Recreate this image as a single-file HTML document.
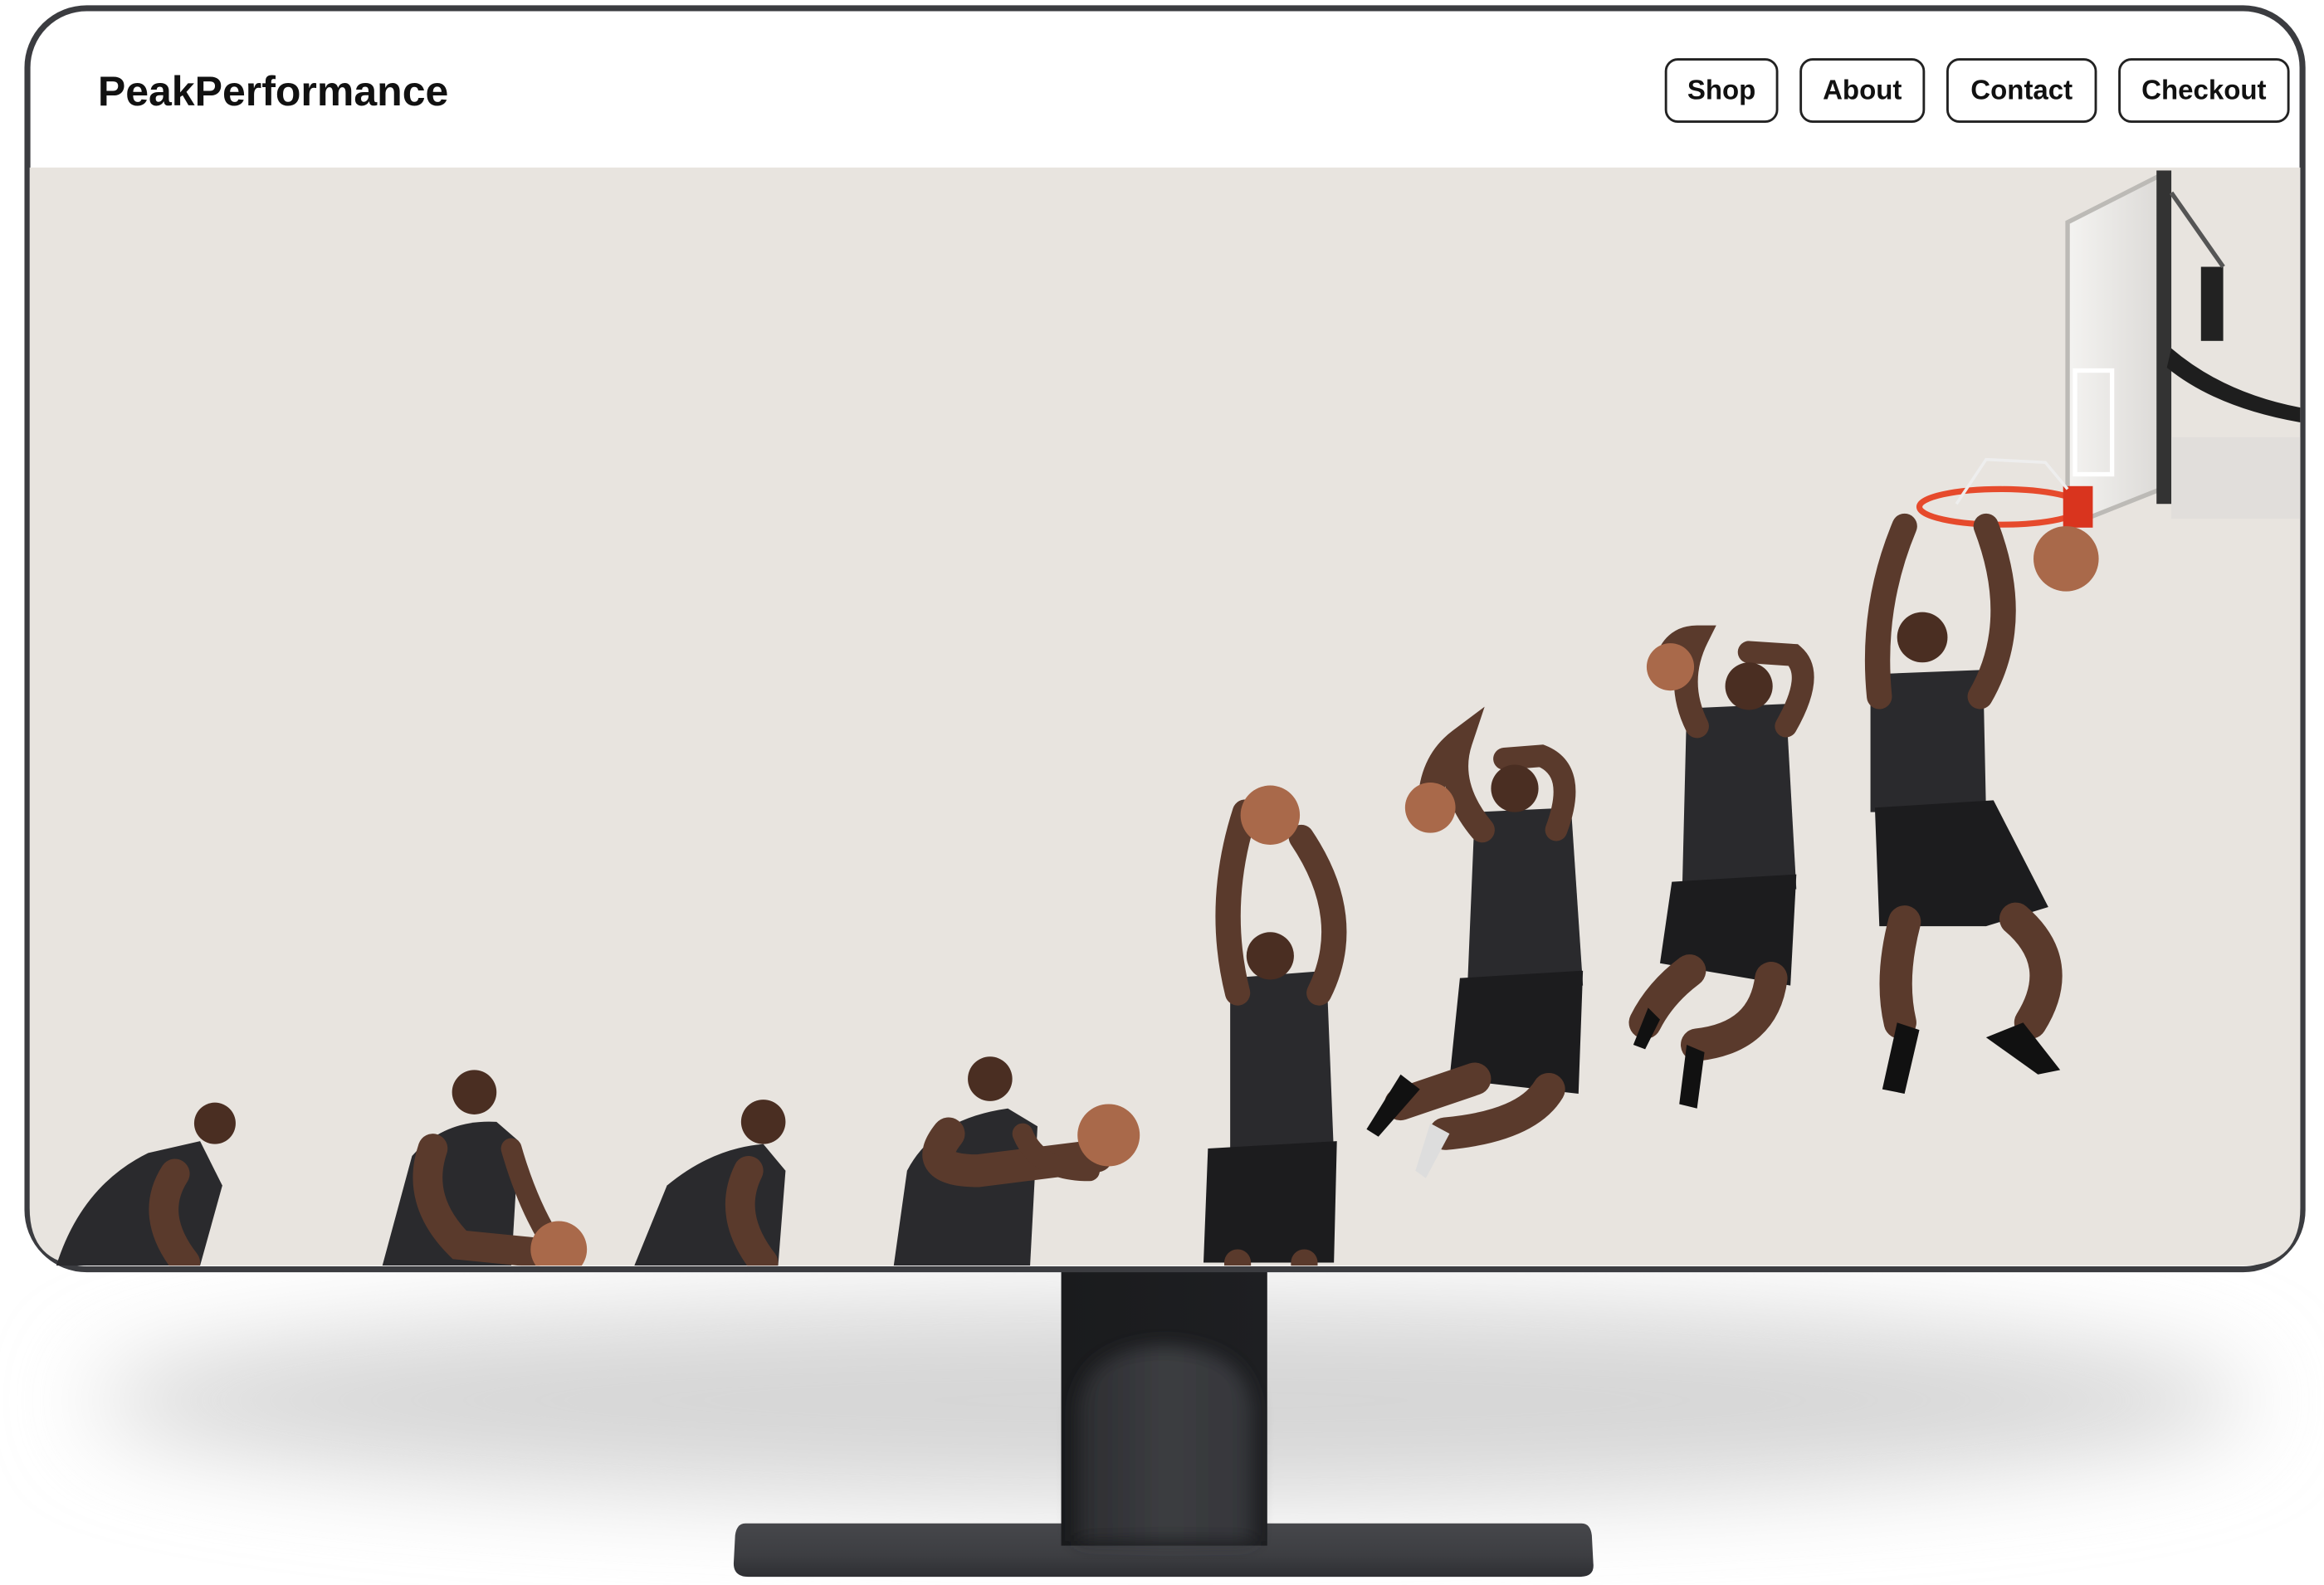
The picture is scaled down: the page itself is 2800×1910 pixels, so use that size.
<!DOCTYPE html>
<html><head><meta charset="utf-8"><style>
html,body{margin:0;padding:0;background:#fff;}
body{width:2800px;height:1910px;overflow:hidden;position:relative;}
svg{position:absolute;left:0;top:0;}
.t{font-family:"Liberation Sans",sans-serif;font-weight:bold;fill:#111;}
</style></head><body>
<svg width="2800" height="1910" viewBox="0 0 1568 1069.5">
<defs>
<filter id="bl" x="-20%" y="-100%" width="140%" height="300%"><feGaussianBlur stdDeviation="32"/></filter>
<filter id="bl2" x="-50%" y="-50%" width="200%" height="200%"><feGaussianBlur stdDeviation="6"/></filter>
<linearGradient id="neck" x1="0" x2="1"><stop offset="0" stop-color="#1a1b1d"/><stop offset="1" stop-color="#1e1f22"/></linearGradient>
<linearGradient id="ins" x1="0" x2="1"><stop offset="0" stop-color="#2c2d31"/><stop offset="0.5" stop-color="#3c3d41"/><stop offset="1" stop-color="#35363a"/></linearGradient>
<linearGradient id="base" x1="0" x2="0" y1="0" y2="1"><stop offset="0" stop-color="#46474b"/><stop offset="0.6" stop-color="#3d3e42"/><stop offset="1" stop-color="#2e2f33"/></linearGradient>
<linearGradient id="glass" x1="0" x2="1"><stop offset="0" stop-color="#f4f3f1"/><stop offset="1" stop-color="#dcdad7"/></linearGradient>
<clipPath id="scr"><rect x="20" y="113" width="1532" height="741"/></clipPath>
</defs>
<!-- shadow -->
<ellipse cx="790" cy="945" rx="730" ry="68" fill="#d6d6d6" filter="url(#bl)"/>
<!-- stand -->
<path d="M503 1028 Q497 1028 496 1036 L495 1055 Q495 1064 505 1064 L1066 1064 Q1076 1064 1075 1055 L1074 1036 Q1073 1028 1067 1028 Z" fill="url(#base)"/>
<rect x="716" y="855" width="139" height="188" fill="url(#neck)"/>
<path d="M727 1040 L727 955 Q727 910 785 908 Q845 910 845 955 L845 1040 Z" fill="url(#ins)" filter="url(#bl2)"/>
<!-- frame -->
<rect x="18.5" y="5.5" width="1535" height="851" rx="40" fill="#fff" stroke="#3b3c40" stroke-width="4"/>
<path d="M20 113 H1552 V815 Q1552 854 1513 854 H59 Q20 854 20 815 Z" fill="#e8e4df"/>
<g clip-path="url(#scr)">
<path d="M1395 150 L1458 118 L1458 330 L1395 355 Z" fill="url(#glass)" stroke="#bcbab6" stroke-width="3"/>
<rect x="1400" y="250" width="25" height="70" fill="none" stroke="#fff" stroke-width="3"/>
<rect x="1455" y="115" width="10" height="225" fill="#333"/>
<path d="M1465 235 Q1500 265 1552 275 L1552 285 Q1495 275 1462 248 Z" fill="#1e1e1e"/>
<rect x="1485" y="180" width="15" height="50" fill="#222"/>
<path d="M1465 130 L1500 180" stroke="#555" stroke-width="3"/>
<rect x="1465" y="295" width="87" height="55" fill="#dedcd9" opacity="0.8"/>
<ellipse cx="1350" cy="342" rx="55" ry="12" fill="none" stroke="#e64a2c" stroke-width="4"/>
<rect x="1392" y="328" width="20" height="28" fill="#d9341e"/>
<path d="M1320 340 L1340 310 L1380 312 L1395 330" stroke="#eee" stroke-width="2" fill="none"/>
<circle cx="1394" cy="377" r="22" fill="#a9694a"/>
<g fill="#2a2a2d">
<path d="M38 854 Q55 800 100 778 L135 770 L150 800 L135 854 Z"/>
<path d="M258 854 L278 780 Q300 755 335 757 L350 770 L345 854 Z"/>
<path d="M428 854 L450 800 Q480 775 515 772 L530 790 L525 854 Z"/>
<path d="M603 854 L612 790 Q630 755 680 748 L700 760 L695 854 Z"/>
<path d="M830 660 L895 655 L900 780 L830 780 Z"/>
<path d="M815 775 L902 770 L900 852 L812 852 Z" fill="#1c1c1e"/>
<path d="M995 548 L1060 545 L1068 665 L990 668 Z"/>
<path d="M985 660 L1068 655 L1065 738 L978 728 Z" fill="#1c1c1e"/>
<path d="M1138 478 L1205 475 L1212 600 L1135 600 Z"/>
<path d="M1128 595 L1212 590 L1208 665 L1120 650 Z" fill="#1c1c1e"/>
<path d="M1262 455 L1338 452 L1340 548 L1262 548 Z"/>
<path d="M1265 545 L1345 540 L1382 612 L1340 625 L1268 625 Z" fill="#1c1c1e"/>
</g>
<g stroke="#5a3a2c" stroke-linecap="round" fill="none">
<path d="M118 792 Q100 820 125 852" stroke-width="20"/>
<path d="M292 775 Q280 810 310 840 L360 845" stroke-width="20"/>
<path d="M345 775 Q355 810 370 835" stroke-width="14"/>
<path d="M505 790 Q490 820 515 852" stroke-width="20"/>
<path d="M640 765 Q620 790 660 790 L740 780" stroke-width="22"/>
<path d="M690 765 Q700 790 735 790" stroke-width="14"/>
<path d="M835 670 Q820 610 840 548" stroke-width="17"/>
<path d="M890 670 Q915 620 878 565" stroke-width="17"/>
<path d="M835 852 L835 860 M880 852 L880 860" stroke-width="18"/>
<path d="M1000 560 Q975 530 985 500 Q965 515 965 545" stroke-width="17"/>
<path d="M1050 560 Q1065 520 1040 510 L1015 512" stroke-width="15"/>
<path d="M995 728 Q960 740 945 745" stroke-width="22"/>
<path d="M1045 735 Q1030 760 975 765" stroke-width="22"/>
<path d="M1145 490 Q1130 460 1145 430 Q1130 430 1125 445" stroke-width="16"/>
<path d="M1205 490 Q1225 455 1210 442 L1180 440" stroke-width="15"/>
<path d="M1140 655 Q1120 670 1110 690" stroke-width="22"/>
<path d="M1195 660 Q1190 700 1145 705" stroke-width="22"/>
<path d="M1268 470 Q1262 410 1285 355" stroke-width="17"/>
<path d="M1336 470 Q1365 420 1340 355" stroke-width="17"/>
<path d="M1285 622 Q1275 660 1282 690" stroke-width="22"/>
<path d="M1360 620 Q1395 650 1370 690" stroke-width="22"/>
</g>
<g fill="#4a2e22">
<circle cx="145" cy="758" r="14"/><circle cx="320" cy="737" r="15"/><circle cx="515" cy="757" r="15"/><circle cx="668" cy="728" r="15"/>
<circle cx="857" cy="645" r="16"/><circle cx="1022" cy="532" r="16"/><circle cx="1180" cy="463" r="16"/><circle cx="1297" cy="430" r="17"/>
</g>
<g fill="#a9694a">
<circle cx="377" cy="843" r="19"/><circle cx="748" cy="766" r="21"/><circle cx="857" cy="550" r="20"/><circle cx="965" cy="545" r="17"/><circle cx="1127" cy="450" r="16"/>
</g>
<g fill="#111">
<path d="M922 762 L945 725 L958 735 L930 767 Z"/><path d="M955 790 L965 758 L978 765 L962 795 Z" fill="#ddd"/>
<path d="M1102 705 L1112 680 L1120 688 L1110 708 Z"/><path d="M1133 745 L1138 705 L1150 710 L1145 748 Z"/>
<path d="M1270 735 L1280 690 L1295 695 L1285 738 Z"/><path d="M1340 700 L1365 690 L1390 722 L1375 725 Z"/>
</g>
</g>
<text class="t" x="66" y="71" font-size="28">PeakPerformance</text>
<g fill="#fff" stroke="#222" stroke-width="1.6">
<rect x="1124" y="40" width="75" height="42" rx="8"/>
<rect x="1215" y="40" width="83" height="42" rx="8"/>
<rect x="1314" y="40" width="100" height="42" rx="8"/>
<rect x="1430" y="40" width="114" height="42" rx="8"/>
</g>
<g class="t" font-size="18.5" text-anchor="middle">
<text x="1161.5" y="67">Shop</text>
<text x="1256.5" y="67">About</text>
<text x="1364" y="67">Contact</text>
<text x="1487" y="67">Checkout</text>
</g>
</svg>
</body></html>
